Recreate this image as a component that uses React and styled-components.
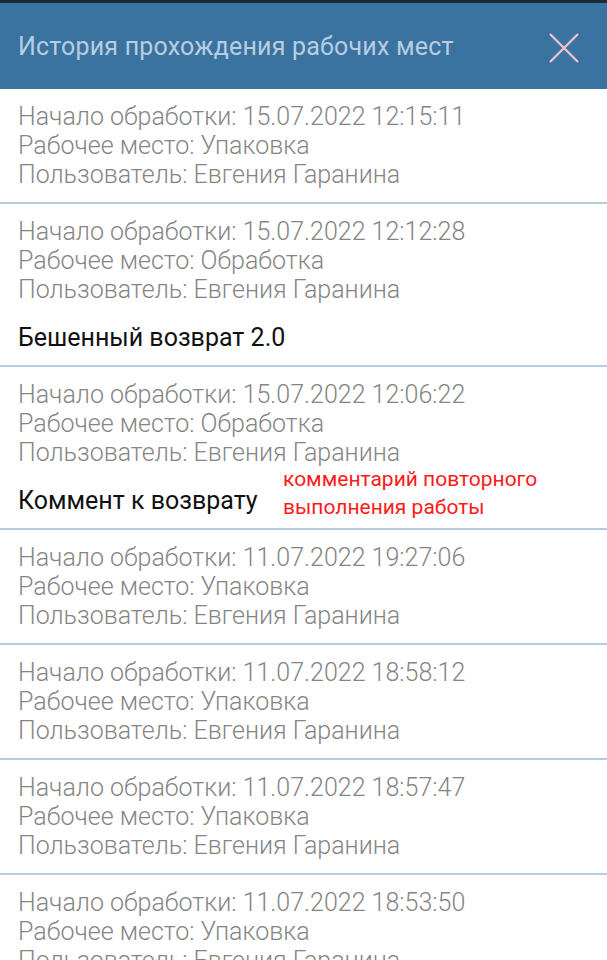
import React from "react";
import styled, { createGlobalStyle } from "styled-components";

const history = [
  { start: "15.07.2022 12:15:11", place: "Упаковка", user: "Евгения Гаранина" },
  {
    start: "15.07.2022 12:12:28",
    place: "Обработка",
    user: "Евгения Гаранина",
    comment: "Бешенный возврат 2.0",
  },
  {
    start: "15.07.2022 12:06:22",
    place: "Обработка",
    user: "Евгения Гаранина",
    comment: "Коммент к возврату",
    note: ["комментарий повторного", "выполнения работы"],
  },
  { start: "11.07.2022 19:27:06", place: "Упаковка", user: "Евгения Гаранина" },
  { start: "11.07.2022 18:58:12", place: "Упаковка", user: "Евгения Гаранина" },
  { start: "11.07.2022 18:57:47", place: "Упаковка", user: "Евгения Гаранина" },
  { start: "11.07.2022 18:53:50", place: "Упаковка", user: "Евгения Гаранина" },
];

const App = () => {
  return (
    <>
      <GlobalStyle />
      <Screen>
        <Header>
          <Title>История прохождения рабочих мест</Title>
          <CloseBtn aria-label="Закрыть">
            <svg width="32" height="32" viewBox="0 0 32 32">
              <path
                d="M2 2 L30 30 M30 2 L2 30"
                stroke="#f4c3cf"
                strokeWidth="2.2"
                fill="none"
              />
            </svg>
          </CloseBtn>
        </Header>

        <List>
          {history.map((item, i) => (
            <Item key={i}>
              <Line>Начало обработки: {item.start}</Line>
              <Line>Рабочее место: {item.place}</Line>
              <Line>Пользователь: {item.user}</Line>
              {item.comment && (
                <CommentRow>
                  <Comment>{item.comment}</Comment>
                  {item.note && (
                    <Note>
                      {item.note.map((n) => (
                        <div key={n}>{n}</div>
                      ))}
                    </Note>
                  )}
                </CommentRow>
              )}
            </Item>
          ))}
        </List>
      </Screen>
    </>
  );
};

const GlobalStyle = createGlobalStyle`
  html, body {
    margin: 0;
    padding: 0;
    background: #ffffff;
  }
  body {
    font-family: Roboto, "Noto Sans", sans-serif;
    overflow: hidden;
  }
`;

const Screen = styled.div`
  width: 607px;
  height: 960px;
  overflow: hidden;
  border-top: 3px solid #1e2a33;
  box-sizing: border-box;
`;

const Header = styled.div`
  height: 86px;
  background: #3b73a0;
  display: flex;
  align-items: center;
  justify-content: space-between;
  padding: 0 27px 0 18px;
`;

const Title = styled.h1`
  margin: 0;
  font-size: 25px;
  font-weight: 400;
  color: #b7cee2;
  letter-spacing: 0.2px;
`;

const CloseBtn = styled.button`
  background: none;
  border: none;
  padding: 0;
  margin-top: 3px;
  width: 32px;
  height: 32px;
  display: flex;
  cursor: pointer;
`;

const List = styled.div`
  display: flex;
  flex-direction: column;
`;

const Item = styled.div`
  padding: 13px 18px 13px;
  border-bottom: 2px solid #b8cce0;
`;

const Line = styled.div`
  font-size: 25px;
  line-height: 29px;
  font-weight: 300;
  color: #858585;
  white-space: nowrap;
`;

const CommentRow = styled.div`
  position: relative;
  margin-top: 19px;
`;

const Comment = styled.div`
  font-size: 25px;
  line-height: 29px;
  font-weight: 400;
  color: #111111;
`;

const Note = styled.div`
  position: absolute;
  left: 265px;
  bottom: -6px;
  font-size: 21px;
  line-height: 28px;
  color: #ff1a1a;
  white-space: nowrap;
`;

export default App;
